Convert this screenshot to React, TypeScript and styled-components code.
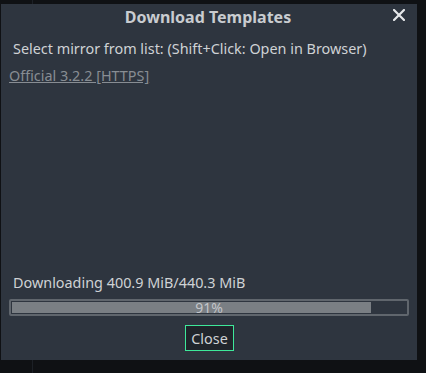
import styled, { createGlobalStyle } from 'styled-components';

const GlobalStyle = createGlobalStyle`
  html, body {
    margin: 0;
    padding: 0;
    background: #0f1114;
  }
  body {
    font-family: "Noto Sans", "DejaVu Sans", sans-serif;
  }
`;

const Screen = styled.div`
  width: 426px;
  height: 373px;
  position: relative;
  overflow: hidden;
  background: linear-gradient(to right, #0f1114 32px, #1c2026 32px, #1c2026 33px, #0f1114 33px);
  padding: 4px 0 0 1px;
  box-sizing: border-box;
`;

const Dialog = styled.div`
  width: 416px;
  height: 356px;
  background: #2e353f;
  display: flex;
  flex-direction: column;
  box-sizing: border-box;
  padding: 0 8px 9px 8px;
`;

const TitleBar = styled.div`
  height: 27px;
  display: flex;
  align-items: center;
  justify-content: center;
  position: relative;
  margin-bottom: 8px;
`;

const Title = styled.div`
  font-size: 16px;
  font-weight: bold;
  color: #c9ccd0;
  margin-left: -2px;
  margin-top: -2px;
`;

const CloseX = styled.button`
  position: absolute;
  right: 1px;
  top: 2px;
  width: 18px;
  height: 18px;
  padding: 0;
  border: none;
  background: transparent;
  display: flex;
  align-items: center;
  justify-content: center;
`;

const Label = styled.div`
  font-size: 14.4px;
  color: #cfd2d5;
  padding-left: 4px;
  line-height: 20px;
`;

const MirrorList = styled.div`
  flex: 1;
  padding-top: 5px;
`;

const MirrorLink = styled.a`
  font-size: 14.4px;
  color: #888d93;
  text-decoration: underline;
  line-height: 20px;
`;

const Progress = styled.div`
  height: 17px;
  border: 2px solid #60666d;
  border-radius: 2px;
  box-sizing: border-box;
  padding: 1px;
  position: relative;
  margin-top: 6px;
`;

const ProgressFill = styled.div`
  height: 100%;
  background: #7a7f84;
`;

const ProgressText = styled.div`
  position: absolute;
  inset: 0;
  display: flex;
  align-items: center;
  justify-content: center;
  font-size: 14px;
  color: #c3c6ca;
`;

const Footer = styled.div`
  display: flex;
  justify-content: center;
  margin-top: 9px;
`;

const Button = styled.button`
  font-family: "Noto Sans", "DejaVu Sans", sans-serif;
  font-size: 14.4px;
  color: #cfd2d5;
  background: #20252b;
  border: 1px solid #3ee89a;
  height: 26px;
  padding: 0 5px;
  margin-left: 1px;
`;

export default function App() {
  const pct = 91;
  return (
    <>
      <GlobalStyle />
      <Screen>
        <Dialog>
          <TitleBar>
            <Title>Download Templates</Title>
            <CloseX aria-label="Close">
              <svg width="12" height="12" viewBox="0 0 12 12">
                <path d="M1 1 L11 11 M11 1 L1 11" stroke="#e6e8ea" strokeWidth="2.2" strokeLinecap="square" />
              </svg>
            </CloseX>
          </TitleBar>
          <Label>Select mirror from list: (Shift+Click: Open in Browser)</Label>
          <MirrorList>
            <MirrorLink>Official 3.2.2 [HTTPS]</MirrorLink>
          </MirrorList>
          <Label>Downloading 400.9 MiB/440.3 MiB</Label>
          <Progress>
            <ProgressFill style={{ width: `${pct}%` }} />
            <ProgressText>{pct}%</ProgressText>
          </Progress>
          <Footer>
            <Button>Close</Button>
          </Footer>
        </Dialog>
      </Screen>
    </>
  );
}
